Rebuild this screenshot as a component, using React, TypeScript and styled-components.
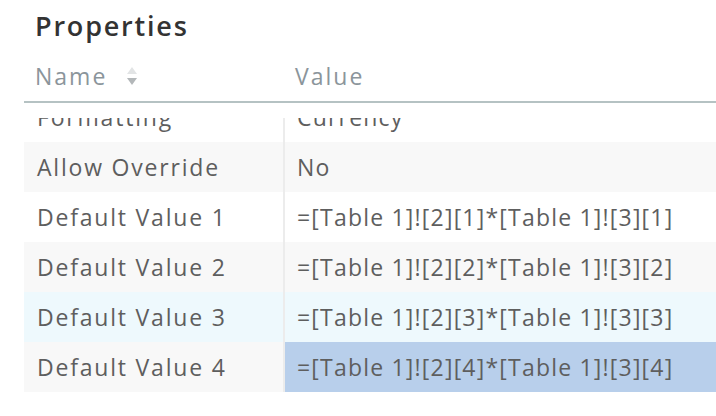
import React from 'react';
import styled, { createGlobalStyle } from 'styled-components';

const GlobalStyle = createGlobalStyle`
  html, body {
    margin: 0;
    padding: 0;
    background: #fff;
  }
  body {
    font-family: "Open Sans", "Noto Sans", sans-serif;
    -webkit-font-smoothing: antialiased;
  }
`;

const Panel = styled.div`
  width: 716px;
  height: 416px;
  overflow: hidden;
  padding-left: 24px;
  box-sizing: border-box;
`;

const Title = styled.h1`
  margin: 0;
  padding: 9px 0 0 11px;
  height: 43px;
  box-sizing: border-box;
  font-size: 27px;
  font-weight: 600;
  color: #333;
  line-height: 34px;
  letter-spacing: 1.8px;
`;

const HeaderRow = styled.div`
  display: grid;
  grid-template-columns: 259px 1fr;
  height: 60px;
  align-items: center;
  border-bottom: 2px solid #b5c2c3;
  box-sizing: border-box;
  padding-top: 8px;
`;

const HeaderCell = styled.div<{ $value?: boolean }>`
  display: flex;
  align-items: center;
  gap: 19px;
  padding-left: ${(p) => (p.$value ? '12px' : '11px')};
  font-size: 23px;
  color: #8b959b;
  letter-spacing: 2px;
`;

const SortIcon = () => (
  <svg width="12" height="20" viewBox="0 0 12 20">
    <path d="M6 1 L11 8 L1 8 Z" fill="#e2e4e5" />
    <path d="M6 19 L11 12 L1 12 Z" fill="#b3b7b9" />
  </svg>
);

const Body = styled.div`
  margin-top: 15px;
  height: 274px;
  overflow: hidden;
`;

const Rows = styled.div`
  margin-top: -26px;
`;

const Row = styled.div<{ $bg: string }>`
  display: grid;
  grid-template-columns: 259px 1fr;
  height: 50px;
  background: ${(p) => p.$bg};
`;

const Cell = styled.div<{ $value?: boolean; $selected?: boolean }>`
  display: flex;
  align-items: center;
  padding-left: ${(p) => (p.$value ? '12px' : '13px')};
  font-size: 23px;
  color: #5e5e5e;
  white-space: nowrap;
  letter-spacing: ${(p) => (p.$value ? '1.2px' : '1.8px')};
  border-left: ${(p) => (p.$value ? '2px solid #ececec' : 'none')};
  background: ${(p) => (p.$selected ? '#b8cfeb' : 'transparent')};
`;

type Prop = { name: string; value: string; bg: string; selected?: boolean };

const rows: Prop[] = [
  { name: 'Formatting', value: 'Currency', bg: '#fff' },
  { name: 'Allow Override', value: 'No', bg: '#f8f8f8' },
  { name: 'Default Value 1', value: '=[Table 1]![2][1]*[Table 1]![3][1]', bg: '#fff' },
  { name: 'Default Value 2', value: '=[Table 1]![2][2]*[Table 1]![3][2]', bg: '#f8f8f8' },
  { name: 'Default Value 3', value: '=[Table 1]![2][3]*[Table 1]![3][3]', bg: '#eef9fd' },
  { name: 'Default Value 4', value: '=[Table 1]![2][4]*[Table 1]![3][4]', bg: '#f8f8f8', selected: true },
];

export default function App() {
  return (
    <>
      <GlobalStyle />
      <Panel>
        <Title>Properties</Title>
        <HeaderRow>
          <HeaderCell>
            Name <SortIcon />
          </HeaderCell>
          <HeaderCell $value>Value</HeaderCell>
        </HeaderRow>
        <Body>
          <Rows>
            {rows.map((r) => (
              <Row key={r.name} $bg={r.bg}>
                <Cell>{r.name}</Cell>
                <Cell $value $selected={r.selected}>
                  {r.value}
                </Cell>
              </Row>
            ))}
          </Rows>
        </Body>
      </Panel>
    </>
  );
}
